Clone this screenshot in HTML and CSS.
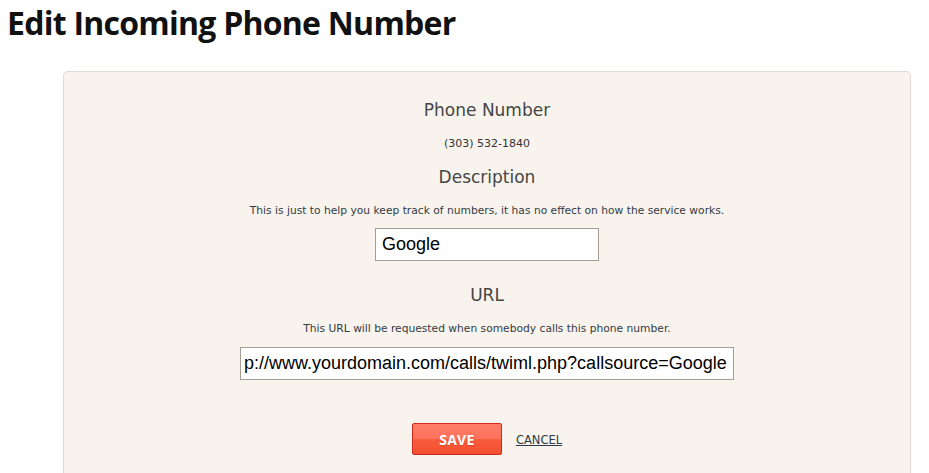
FILE: index.html
```html
<!DOCTYPE html>
<html>
<head>
<meta charset="utf-8">
<link rel="stylesheet" href="styles.css">
</head>
<body>
<h1 class="title">Edit Incoming Phone Number</h1>
<div class="panel">
  <h2 class="label">Phone Number</h2>
  <p class="value">(303) 532-1840</p>
  <h2 class="label label-desc">Description</h2>
  <p class="help">This is just to help you keep track of numbers, it has no effect on how the service works.</p>
  <input class="field field-desc" type="text" value="Google">
  <h2 class="label label-url">URL</h2>
  <p class="help help-url">This URL will be requested when somebody calls this phone number.</p>
  <div class="field field-url"><span>p://www.yourdomain.com/calls/twiml.php?callsource=Google</span></div>
  <div class="actions">
    <button class="save">SAVE</button>
    <a class="cancel" href="#">CANCEL</a>
  </div>
</div>
</body>
</html>
```
FILE: styles.css
```css
html, body {
  margin: 0;
  padding: 0;
  background: #fff;
  overflow: hidden;
}
body {
  width: 929px;
  height: 473px;
  font-family: "DejaVu Sans", sans-serif;
}
.title {
  margin: 0;
  padding: 3px 0 0 7px;
  font-family: "Open Sans", sans-serif;
  font-weight: 700;
  font-size: 32px;
  line-height: 40px;
  color: #111;
  letter-spacing: -0.75px;
}
.panel {
  margin: 28px 0 0 63px;
  width: 848px;
  height: 420px;
  background: #f8f4ed;
  border: 1px solid #dcd8d2;
  border-radius: 5px;
  display: flex;
  flex-direction: column;
  align-items: center;
  box-sizing: border-box;
  padding-top: 27px;
  color: #444;
}
.label {
  margin: 0;
  font-family: "DejaVu Sans", sans-serif;
  font-weight: 400;
  font-size: 17px;
  line-height: 22px;
  color: #454545;
}
.value {
  margin: 16px 0 0;
  font-size: 11px;
  line-height: 14px;
  color: #333;
}
.label-desc { margin-top: 15px; }
.help {
  margin: 16px 0 0;
  font-size: 10.7px;
  line-height: 14px;
  color: #333a45;
}
.field {
  box-sizing: border-box;
  height: 33px;
  border: 1px solid #a59d94;
  background: #fff;
  font-family: "Liberation Sans", Arial, sans-serif;
  font-size: 18px;
  color: #000;
  padding: 0 6px;
}
.field-desc {
  width: 224px;
  margin-top: 10px;
  outline: none;
}
.label-url { margin-top: 23px; }
.help-url { margin-top: 16px; }
.field-url {
  width: 494px;
  margin-top: 11px;
  overflow: hidden;
  white-space: nowrap;
  display: flex;
  align-items: center;
  padding: 0 0 0 3px;
}
.actions {
  margin-top: 43px;
  display: flex;
  align-items: center;
  gap: 14px;
}
.save {
  width: 90px;
  height: 32px;
  border: 1px solid #cf2a1d;
  border-radius: 2px;
  background: linear-gradient(#ff7c66 0%, #fd725b 50%, #f85a3e 52%, #f4502f 100%);
  color: #fff;
  font-family: "Open Sans", sans-serif;
  font-weight: 700;
  font-size: 14px;
  letter-spacing: 0.2px;
  text-shadow: 0 1px 0 rgba(150, 40, 20, 0.35);
  padding: 0;
}
.cancel {
  font-family: "DejaVu Sans", sans-serif;
  font-size: 11.5px;
  color: #2e3a4a;
  text-decoration: underline;
  margin-top: 2px;
}
```
